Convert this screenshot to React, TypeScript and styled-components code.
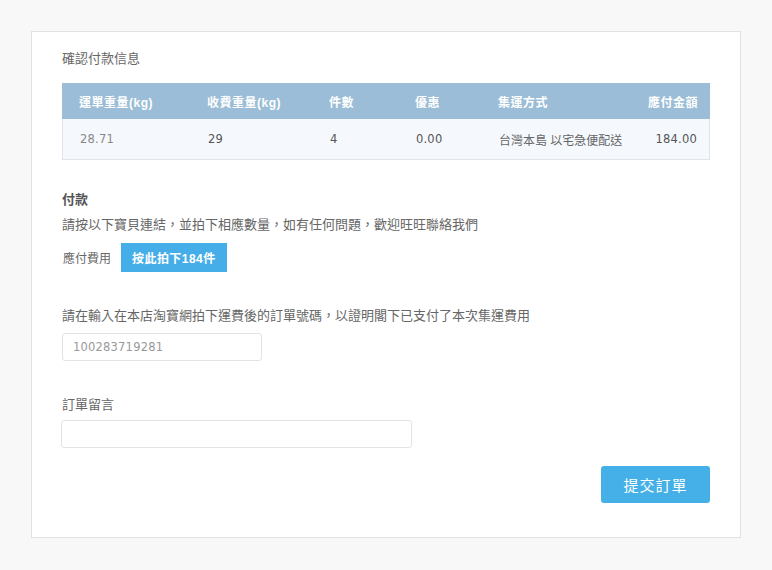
import styled, { createGlobalStyle } from "styled-components";

const GlobalStyle = createGlobalStyle`
  html, body {
    margin: 0;
    padding: 0;
    background: #f8f8f8;
  }
  body {
    font-family: "Liberation Sans", "Noto Sans CJK TC", sans-serif;
    color: #666;
  }
`;

const Page = styled.div`
  padding: 31px 31px 32px 31px;
`;

const Card = styled.div`
  background: #fff;
  border: 1px solid #e2e2e2;
  padding: 17px 30px 34px 30px;
  display: flex;
  flex-direction: column;
`;

const Title = styled.div`
  font-size: 13px;
  line-height: 20px;
  color: #666;
  margin-bottom: 14px;
`;

const Table = styled.div`
  border: 1px solid #dfe5ea;
  border-top: none;
`;

const Row = styled.div<{ $head?: boolean }>`
  display: grid;
  grid-template-columns: 128px 122px 86px 83px 1fr auto;
  align-items: center;
  padding: 0 12px 0 17px;
  height: ${(p) => (p.$head ? "36px" : "40px")};
  background: ${(p) => (p.$head ? "#9bbdd7" : "#f5f9fd")};
  color: ${(p) => (p.$head ? "#fff" : "#555")};
  font-size: 12px;
  font-weight: ${(p) => (p.$head ? 700 : 400)};
  margin: ${(p) => (p.$head ? "0 -1px" : "0")};
`;

const Cell = styled.div<{ $num?: boolean; $light?: boolean; $right?: boolean }>`
  font-family: ${(p) =>
    p.$num ? '"DejaVu Sans", "Noto Sans CJK TC", sans-serif' : "inherit"};
  font-size: ${(p) => (p.$num ? "11.5px" : "12px")};
  letter-spacing: ${(p) => (p.$num ? "0.2px" : "0.5px")};
  color: ${(p) => (p.$light ? "#888" : "inherit")};
  text-align: ${(p) => (p.$right ? "right" : "left")};
  white-space: nowrap;
`;

const MethodCell = styled(Cell)`
  letter-spacing: 0;
  color: #666;
`;

const SectionTitle = styled.div`
  font-size: 13px;
  font-weight: 700;
  line-height: 20px;
  color: #555;
  margin-top: 30px;
`;

const Text = styled.div<{ $gap?: number }>`
  font-size: 13px;
  line-height: 20px;
  color: #666;
  margin-top: ${(p) => p.$gap ?? 0}px;
`;

const PayRow = styled.div`
  display: flex;
  align-items: center;
  gap: 10px;
  margin-top: 8px;
  padding-left: 1px;
`;

const PayLabel = styled.span`
  font-size: 12px;
  color: #666;
`;

const PayButton = styled.button`
  height: 29px;
  padding: 0 11px;
  background: #45aee8;
  border: none;
  color: #fff;
  font-family: "Liberation Sans", "Noto Sans CJK TC", sans-serif;
  font-size: 12px;
  font-weight: 700;
  letter-spacing: 0.45px;
`;

const Input = styled.input<{ $w: number; $gap: number; $shift?: number }>`
  box-sizing: border-box;
  width: ${(p) => p.$w}px;
  height: 28px;
  margin-top: ${(p) => p.$gap}px;
  margin-left: ${(p) => p.$shift ?? 0}px;
  border: 1px solid #e3e3e3;
  border-radius: 3px;
  padding: 0 10px;
  font-family: "DejaVu Sans", sans-serif;
  font-size: 11.5px;
  letter-spacing: 0.2px;
  color: #555;
  outline: none;
  &::placeholder {
    color: #999;
  }
`;

const Footer = styled.div`
  display: flex;
  justify-content: flex-end;
  margin-top: 18px;
`;

const SubmitButton = styled.button`
  width: 109px;
  height: 37px;
  background: #45b0e8;
  border: none;
  border-radius: 3px;
  color: #fff;
  font-family: "Liberation Sans", "Noto Sans CJK TC", sans-serif;
  font-size: 15px;
  letter-spacing: 1px;
`;

export default function App() {
  return (
    <>
      <GlobalStyle />
      <Page>
        <Card>
          <Title>確認付款信息</Title>
          <Table>
            <Row $head>
              <Cell>運單重量(kg)</Cell>
              <Cell>收費重量(kg)</Cell>
              <Cell>件數</Cell>
              <Cell>優惠</Cell>
              <Cell>集運方式</Cell>
              <Cell $right>應付金額</Cell>
            </Row>
            <Row>
              <Cell $num $light>28.71</Cell>
              <Cell $num>29</Cell>
              <Cell $num>4</Cell>
              <Cell $num>0.00</Cell>
              <MethodCell>台灣本島 以宅急便配送</MethodCell>
              <Cell $num $right>184.00</Cell>
            </Row>
          </Table>

          <SectionTitle>付款</SectionTitle>
          <Text $gap={5}>請按以下寶貝連結，並拍下相應數量，如有任何問題，歡迎旺旺聯絡我們</Text>
          <PayRow>
            <PayLabel>應付費用</PayLabel>
            <PayButton>按此拍下184件</PayButton>
          </PayRow>

          <Text $gap={34}>請在輸入在本店淘寶網拍下運費後的訂單號碼，以證明閣下已支付了本次集運費用</Text>
          <Input $w={200} $gap={7} placeholder="100283719281" />

          <Text $gap={34}>訂單留言</Text>
          <Input $w={351} $gap={5} $shift={-1} />

          <Footer>
            <SubmitButton>提交訂單</SubmitButton>
          </Footer>
        </Card>
      </Page>
    </>
  );
}
